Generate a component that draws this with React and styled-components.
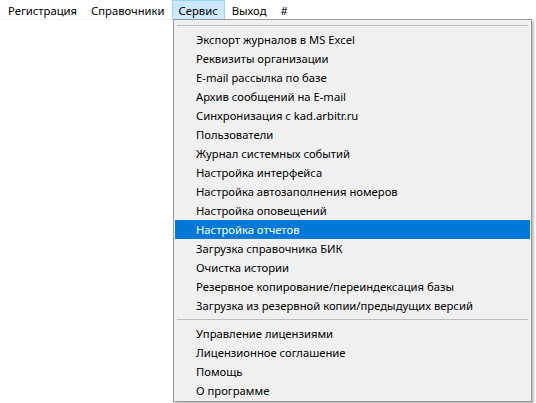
import React from "react";
import styled, { createGlobalStyle } from "styled-components";

const Global = createGlobalStyle`
  html, body { margin: 0; padding: 0; background: #ffffff; }
  body { font-family: "Noto Sans", "Segoe UI", sans-serif; font-size: 11.25px; color: #000; overflow: hidden; }
  #root { width: 536px; height: 403px; position: relative; }
`;

const Page = styled.div`
  position: relative;
  width: 536px;
  height: 403px;
  background: #ffffff;
`;

const MenuBar = styled.div`
  display: flex;
  align-items: stretch;
  height: 19px;
  padding-left: 1px;
  border-bottom: 1px solid #f2f2f2;
  background: #ffffff;
`;

const BarItem = styled.div`
  display: flex;
  align-items: center;
  padding: 0 6px;
  height: 19px;
  box-sizing: border-box;
  border: 1px solid ${(p) => (p.$open ? "#99d1ff" : "transparent")};
  border-bottom: none;
  background: ${(p) => (p.$open ? "#cce8ff" : "transparent")};
  white-space: nowrap;
  line-height: 17px;
`;

const Dropdown = styled.div`
  position: absolute;
  left: 173px;
  top: 19px;
  width: 359px;
  box-sizing: border-box;
  background: #f0f0f0;
  border: 1px solid #979797;
  padding: 1px;
  box-shadow: 2px 2px 2px rgba(0, 0, 0, 0.25);
  display: flex;
  flex-direction: column;
`;

const Separator = styled.div`
  height: 9px;
  display: flex;
  align-items: center;
  padding: 0 2px;
  &::after {
    content: "";
    flex: 1;
    height: 1px;
    background: #bdbdbd;
  }
`;

const Item = styled.div`
  height: 19px;
  line-height: 19px;
  padding-left: 21px;
  white-space: nowrap;
  color: ${(p) => (p.$active ? "#ffffff" : "#000000")};
  background: ${(p) => (p.$active ? "#0078d7" : "transparent")};
`;

const group1 = [
  "Экспорт журналов в MS Excel",
  "Реквизиты организации",
  "E-mail рассылка по базе",
  "Архив сообщений на E-mail",
  "Синхронизация с kad.arbitr.ru",
  "Пользователи",
  "Журнал системных событий",
  "Настройка интерфейса",
  "Настройка автозаполнения номеров",
  "Настройка оповещений",
  "Настройка отчетов",
  "Загрузка справочника БИК",
  "Очистка истории",
  "Резервное копирование/переиндексация базы",
  "Загрузка из резервной копии/предыдущих версий",
];

const group2 = [
  "Управление лицензиями",
  "Лицензионное соглашение",
  "Помощь",
  "О программе",
];

export default function App() {
  return (
    <Page>
      <Global />
      <MenuBar>
        <BarItem>Регистрация</BarItem>
        <BarItem>Справочники</BarItem>
        <BarItem $open>Сервис</BarItem>
        <BarItem>Выход</BarItem>
        <BarItem>#</BarItem>
      </MenuBar>
      <Dropdown>
        <Separator />
        {group1.map((t) => (
          <Item key={t} $active={t === "Настройка отчетов"}>
            {t}
          </Item>
        ))}
        <Separator />
        {group2.map((t) => (
          <Item key={t}>{t}</Item>
        ))}
      </Dropdown>
    </Page>
  );
}
